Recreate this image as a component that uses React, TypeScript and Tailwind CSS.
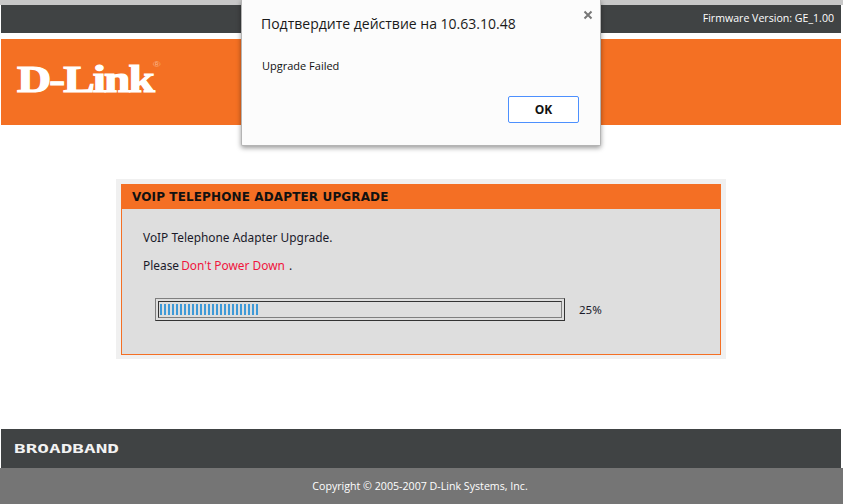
const PROGRESS_TICKS = 25

const ConfirmDialog = () => {
  return (
    <div className="absolute left-[241px] top-0 h-[146px] w-[360px] rounded-b-[2px] border border-t-0 border-[#b4b4b4] bg-[#fcfcfc] shadow-[0_2px_5px_rgba(0,0,0,0.4)]">
      <p className="absolute left-[19px] top-[14px] text-[14px] leading-[20px] text-[#1a1a1a] [font-family:'Open_Sans',sans-serif]">
        Подтвердите действие на 10.63.10.48
      </p>
      <svg className="absolute left-[341px] top-[10px] h-[10px] w-[10px]" viewBox="0 0 10 10" fill="none">
        <path d="M1.5 1.5l7 7M8.5 1.5l-7 7" stroke="#777777" strokeWidth="2" />
      </svg>
      <p className="absolute left-[20px] top-[58px] text-[11px] leading-[16px] text-[#111111] [font-family:'Open_Sans',sans-serif]">
        Upgrade Failed
      </p>
      <button className="absolute left-[266px] top-[96px] h-[27px] w-[71px] rounded-[2px] border border-[#4d90fe] bg-white text-[12px] font-bold text-[#111111] [font-family:'Open_Sans',sans-serif]">
        OK
      </button>
    </div>
  )
}

const ProgressBar = () => {
  return (
    <div className="flex items-center">
      <div className="h-[23px] w-[410px] border border-[#7f7f7f] border-r-[#333333] border-b-[#333333] p-[2px]">
        <div className="flex h-[17px] items-center border border-[#333333] border-r-[#7f7f7f] border-b-[#7f7f7f] pl-[1px]">
          <div className="flex h-[11px] gap-[2px]">
            {Array.from({ length: PROGRESS_TICKS }).map((_, index) => (
              <div key={index} className="h-full w-[2px] bg-[#3f9ad8]" />
            ))}
          </div>
        </div>
      </div>
      <span className="ml-[14px] text-[11.5px] text-[#1a1a2a] [font-family:'Noto_Sans',sans-serif]">25%</span>
    </div>
  )
}

export default function App() {
  return (
    <div className="relative flex h-[504px] w-[843px] flex-col overflow-hidden bg-white [font-family:'DejaVu_Sans',sans-serif]">
      <div className="h-[5px] bg-[#c8c8c8]" />
      <div className="ml-[1px] mr-[2px] flex h-[28px] items-center justify-end bg-[#404344] pr-[7px] text-[10.6px] text-white [font-family:'Open_Sans',sans-serif]">
        Firmware Version: GE_1.00
      </div>
      <div className="h-[6px]" />
      <div className="ml-[1px] mr-[2px] flex h-[86px] items-center bg-[#f47023] pl-[16px]">
        <span className="relative -mt-[5px] origin-left scale-x-[1.28] text-[37px] font-bold leading-none tracking-[-1.5px] text-white [-webkit-text-stroke:1.2px_white] [font-family:'Liberation_Serif',serif]">
          D-Link
          <span className="absolute -right-[6px] top-[0px] text-[8px] font-normal tracking-normal text-[#f8b58a] [-webkit-text-stroke:0] [font-family:'Liberation_Sans',sans-serif]">
            ®
          </span>
        </span>
      </div>
      <div className="flex flex-1 items-start pl-[116px] pt-[54px]">
        <div className="w-[610px] bg-[#f0f0f0] p-[5px] pb-[4px]">
          <div className="flex h-[25px] items-center bg-[#f46f24] pl-[11px] text-[12px] font-bold tracking-[0.13px] text-[#111111]">
            VOIP TELEPHONE ADAPTER UPGRADE
          </div>
          <div className="h-[146px] border border-t-0 border-[#f46f24] bg-[#dedede] pl-[21px] pt-[20px] text-[11.9px] text-[#1a1a2a] [font-family:'Noto_Sans',sans-serif]">
            <p className="leading-[16px]">VoIP Telephone Adapter Upgrade.</p>
            <p className="mt-[12px] leading-[16px]">
              Please <span className="-ml-[1px] text-[#f0143c]">Don't Power Down</span> <span className="ml-[1px]">.</span>
            </p>
            <div className="ml-[12px] mt-[25px]">
              <ProgressBar />
            </div>
          </div>
        </div>
      </div>
      <div className="ml-[1px] mr-[2px] flex h-[39px] items-center bg-[#404344] pl-[13px]">
        <span className="origin-left scale-x-[1.49] text-[13px] font-bold text-[#f2f2f2] [font-family:'DejaVu_Sans_Mono',monospace]">BROADBAND</span>
      </div>
      <div className="flex h-[36px] items-center justify-center bg-[#757575] pr-[3px] pt-[1px] text-[10.65px] text-white [font-family:'Open_Sans',sans-serif]">
        Copyright © 2005-2007 D-Link Systems, Inc.
      </div>
      <ConfirmDialog />
    </div>
  )
}
